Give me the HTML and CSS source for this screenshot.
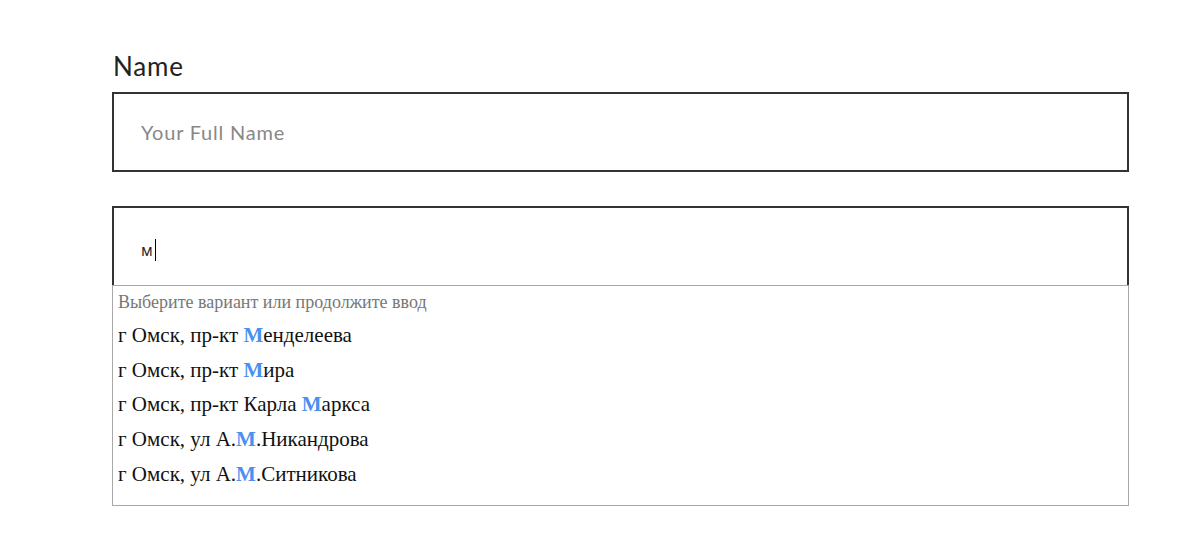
FILE: index.html
```html
<!DOCTYPE html>
<html lang="ru">
<head>
    <meta charset="UTF-8">
    <meta name="viewport" content="width=device-width, initial-scale=1.0">
    <title>Форма</title>
    <link rel="stylesheet" href="styles.css">
</head>
<body>
    <form class="form">
        <div class="field">
            <label class="label" for="name">Name</label>
            <div class="input" id="name"><span class="placeholder">Your Full Name</span></div>
        </div>

        <div class="field field-address">
            <div class="input input-open"><span class="value">м</span><span class="caret"></span></div>
            <div class="suggestions">
                <div class="suggestions-hint">Выберите вариант или продолжите ввод</div>
                <div class="suggestion">г Омск, пр-кт <strong>М</strong>енделеева</div>
                <div class="suggestion">г Омск, пр-кт <strong>М</strong>ира</div>
                <div class="suggestion">г Омск, пр-кт Карла <strong>М</strong>аркса</div>
                <div class="suggestion">г Омск, ул А.<strong>М</strong>.Никандрова</div>
                <div class="suggestion">г Омск, ул А.<strong>М</strong>.Ситникова</div>
            </div>
        </div>
    </form>
</body>
</html>
```

FILE: styles.css
```css
/* General */
body {
    margin: 0;
    padding: 0;
    background: #fff;
    font-family: 'Lato', 'Noto Sans', sans-serif;
}

.form {
    width: 1017px;
    padding: 48px 0 0 112px;
}

/* Fields */
.label {
    display: block;
    font-size: 26px;
    line-height: 36px;
    letter-spacing: 0.8px;
    color: #222;
    padding-left: 1px;
    margin-bottom: 8px;
}

.input {
    box-sizing: border-box;
    height: 80px;
    border: 2px solid #333;
    display: flex;
    align-items: center;
    padding-left: 27px;
    font-size: 20px;
}

.placeholder {
    color: #888;
    letter-spacing: 0.8px;
}

.field-address {
    margin-top: 34px;
}

.input-open {
    border-bottom: none;
    height: 79px;
    padding-top: 6px;
}

.value {
    font-family: 'Open Sans', sans-serif;
    font-size: 16px;
    color: #222;
}

.caret {
    display: inline-block;
    width: 1px;
    height: 22px;
    background: #000;
    margin-left: 2px;
}

/* Suggestions */
.suggestions {
    border: 1px solid #a8a8a8;
    font-family: 'Liberation Serif', 'Times New Roman', serif;
    padding: 3px 0 13px 5px;
}

.suggestions-hint {
    font-size: 18px;
    line-height: 26px;
    color: #777;
    margin-bottom: 3px;
}

.suggestion {
    font-size: 21px;
    line-height: 34.7px;
    color: #111;
}

.suggestion strong {
    color: #4a90f0;
}
```
